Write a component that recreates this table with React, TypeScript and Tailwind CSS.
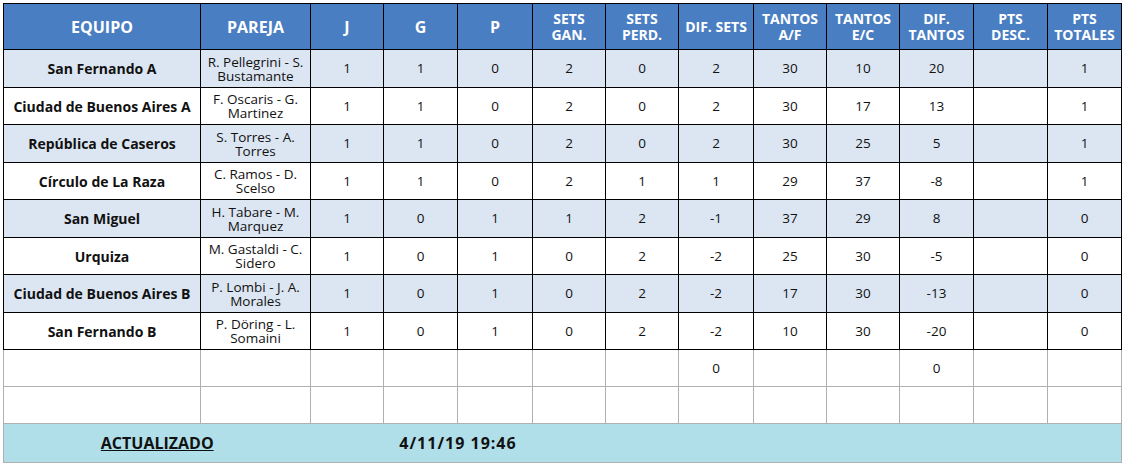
import React from "react";

const widths = [197, 110, 73, 74, 75, 73, 73, 75, 73, 73, 74, 74, 74];

const headers: React.ReactNode[] = [
  "EQUIPO",
  "PAREJA",
  "J",
  "G",
  "P",
  <>SETS<br />GAN.</>,
  <>SETS<br />PERD.</>,
  "DIF. SETS",
  <>TANTOS<br />A/F</>,
  <>TANTOS<br />E/C</>,
  <>DIF.<br />TANTOS</>,
  <>PTS<br />DESC.</>,
  <>PTS<br />TOTALES</>,
];

type Row = [string, string, string, ...string[]];

const rows: Row[] = [
  ["San Fernando A", "R. Pellegrini - S.", "Bustamante", "1", "1", "0", "2", "0", "2", "30", "10", "20", "", "1"],
  ["Ciudad de Buenos Aires A", "F. Oscaris - G.", "Martinez", "1", "1", "0", "2", "0", "2", "30", "17", "13", "", "1"],
  ["República de Caseros", "S. Torres - A.", "Torres", "1", "1", "0", "2", "0", "2", "30", "25", "5", "", "1"],
  ["Círculo de La Raza", "C. Ramos - D.", "Scelso", "1", "1", "0", "2", "1", "1", "29", "37", "-8", "", "1"],
  ["San Miguel", "H. Tabare - M.", "Marquez", "1", "0", "1", "1", "2", "-1", "37", "29", "8", "", "0"],
  ["Urquiza", "M. Gastaldi - C.", "Sidero", "1", "0", "1", "0", "2", "-2", "25", "30", "-5", "", "0"],
  ["Ciudad de Buenos Aires B", "P. Lombi - J. A.", "Morales", "1", "0", "1", "0", "2", "-2", "17", "30", "-13", "", "0"],
  ["San Fernando B", "P. Döring - L.", "Somaini", "1", "0", "1", "0", "2", "-2", "10", "30", "-20", "", "0"],
];

const rowHeights = [38, 37, 38, 37, 38, 37, 38, 37];

export default function App() {
  return (
    <div
      className="w-[1126px] h-[465px] bg-white pl-[3px] pt-[3px]"
      style={{ fontFamily: '"Open Sans", "DejaVu Sans", sans-serif' }}
    >
      <table className="border-collapse table-fixed w-[1118px] text-[#111]">
        <colgroup>
          {widths.map((w, i) => (
            <col key={i} style={{ width: w }} />
          ))}
        </colgroup>
        <thead>
          <tr className="h-[46px] bg-[#4a7ec3]">
            {headers.map((h, i) => (
              <th
                key={i}
                className={`border border-black p-0 text-center align-middle font-bold text-white ${
                  i < 5 ? "text-[16px]" : "text-[14px] leading-[16px]"
                }`}
              >
                {h}
              </th>
            ))}
          </tr>
        </thead>
        <tbody>
          {rows.map((r, ri) => (
            <tr
              key={ri}
              className={ri % 2 === 0 ? "bg-[#dce6f2]" : "bg-white"}
              style={{ height: rowHeights[ri] }}
            >
              <td className="border border-black p-0 text-center align-middle text-[14px] font-bold">
                {r[0]}
              </td>
              <td className="border border-black p-0 text-center align-middle text-[13.5px] leading-[14px]">
                {r[1]}
                <br />
                {r[2]}
              </td>
              {r.slice(3).map((v, ci) => (
                <td
                  key={ci}
                  className="border border-black p-0 text-center align-middle text-[13.5px]"
                >
                  {v}
                </td>
              ))}
            </tr>
          ))}
          {[0, 1].map((ri) => (
            <tr key={`e${ri}`} className="h-[37px] bg-white">
              {widths.map((_, ci) => (
                <td
                  key={ci}
                  className="border border-[#b0b0b0] p-0 text-center align-middle text-[13.5px]"
                  style={ri === 0 ? { borderTopColor: "#000" } : undefined}
                >
                  {ri === 0 && (ci === 7 || ci === 10) ? "0" : ""}
                </td>
              ))}
            </tr>
          ))}
          <tr className="h-[39px] bg-[#b0dfe9]">
            <td
              colSpan={2}
              className="border-y border-l border-[#b0b0b0] p-0 text-center align-middle text-[16px] font-bold underline"
            >
              ACTUALIZADO
            </td>
            <td className="border-y border-[#b0b0b0] p-0" />
            <td
              colSpan={2}
              className="border-y border-[#b0b0b0] p-0 text-center align-middle text-[16px] font-bold tracking-[1px]"
            >
              4/11/19 19:46
            </td>
            <td colSpan={8} className="border-y border-r border-[#b0b0b0] p-0" />
          </tr>
        </tbody>
      </table>
    </div>
  );
}
